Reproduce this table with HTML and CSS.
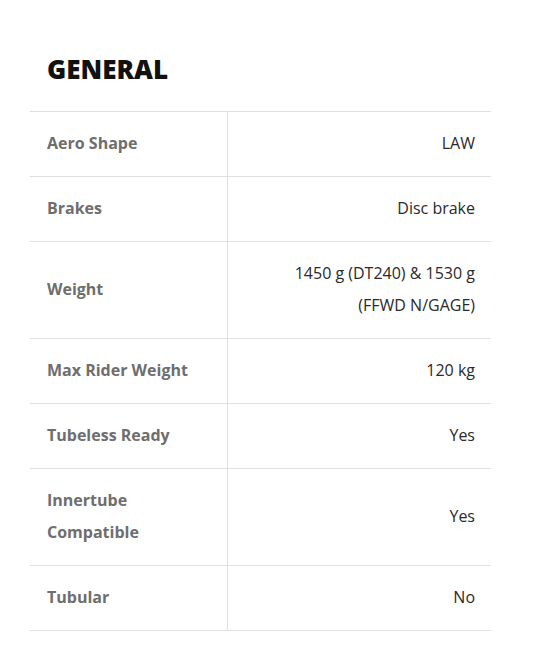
FILE: index.html
```html
<!DOCTYPE html>
<html>
<head>
<meta charset="utf-8">
<link rel="stylesheet" href="styles.css">
</head>
<body>
<section class="specs">
  <h2 class="specs-title">GENERAL</h2>
  <div class="spec-table">
    <div class="spec-row"><div class="spec-label">Aero Shape</div><div class="spec-value">LAW</div></div>
    <div class="spec-row"><div class="spec-label">Brakes</div><div class="spec-value">Disc brake</div></div>
    <div class="spec-row"><div class="spec-label">Weight</div><div class="spec-value">1450 g (DT240) &amp; 1530 g<br>(FFWD N/GAGE)</div></div>
    <div class="spec-row"><div class="spec-label">Max Rider Weight</div><div class="spec-value">120 kg</div></div>
    <div class="spec-row"><div class="spec-label">Tubeless Ready</div><div class="spec-value">Yes</div></div>
    <div class="spec-row"><div class="spec-label">Innertube<br>Compatible</div><div class="spec-value">Yes</div></div>
    <div class="spec-row"><div class="spec-label">Tubular</div><div class="spec-value">No</div></div>
  </div>
</section>
</body>
</html>
```

FILE: styles.css
```css
html, body {
  margin: 0;
  padding: 0;
  background: #fff;
}
.specs {
  padding: 51px 0 0 30px;
  width: 461px;
  font-family: "Open Sans", "Liberation Sans", sans-serif;
}
.specs-title {
  margin: 0 0 24px 17px;
  font-size: 26px;
  line-height: 36px;
  font-weight: 800;
  color: #111;
}
.spec-table {
  border-top: 1px solid #e0e0e0;
}
.spec-row {
  display: grid;
  grid-template-columns: 198px 1fr;
  border-bottom: 1px solid #e0e0e0;
}
.spec-label {
  padding: 15px 0 17px 17px;
  font-size: 16px;
  line-height: 32px;
  font-weight: 700;
  color: #6e6e6e;
  display: flex;
  align-items: center;
  border-right: 1px solid #e0e0e0;
}
.spec-value {
  padding: 15px 16px 17px 16px;
  font-size: 16px;
  line-height: 32px;
  color: #2a2a2a;
  text-align: right;
  display: flex;
  align-items: center;
  justify-content: flex-end;
}
```
